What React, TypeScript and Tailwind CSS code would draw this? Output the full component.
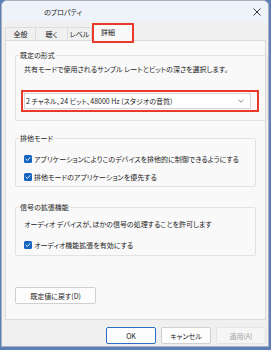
import React from "react";

function Check() {
  return (
    <span className="flex h-[8px] w-[8px] shrink-0 items-center justify-center rounded-[1.5px] bg-[#1565c0]">
      <svg width="6" height="6" viewBox="0 0 6 6" fill="none">
        <path d="M1 3.2 L2.4 4.5 L5 1.6" stroke="#fff" strokeWidth="0.9" strokeLinecap="round" strokeLinejoin="round" />
      </svg>
    </span>
  );
}

function Group({ title, className, children }: { title: string; className: string; children: React.ReactNode }) {
  return (
    <fieldset className={`mx-[9px] rounded-[2px] border border-[#e2e2e2] px-[8px] ${className}`}>
      <legend className="-ml-[5px] px-[1px] leading-[8px]">{title}</legend>
      {children}
    </fieldset>
  );
}

export default function App() {
  return (
    <div className="h-[350px] w-[271px] overflow-hidden bg-[#5d7eb4] text-[7px] leading-[8px] text-[#1b1b1b] [font-family:'Noto_Sans_CJK_JP',sans-serif] [font-feature-settings:'palt']">
      <div className="ml-[1px] flex h-[347px] w-[268px] flex-col overflow-hidden rounded-t-[6px] border border-[#a9b3c0] bg-[#f0f0f0]">
        {/* title bar */}
        <div className="flex h-[21px] shrink-0 items-center bg-[#eef3f9] pl-[42px] pr-[7px]">
          <span className="flex-1">のプロパティ</span>
          <svg width="8" height="8" viewBox="0 0 8 8">
            <path d="M0.5 0.5 L7.5 7.5 M7.5 0.5 L0.5 7.5" stroke="#222" strokeWidth="0.9" />
          </svg>
        </div>

        {/* tabs */}
        <div className="relative z-10 ml-[3px] flex h-[18px] shrink-0 items-end">
          <div className="flex h-[13px] w-[30px] items-center justify-center border-l border-t border-[#dcdcdc]">全般</div>
          <div className="flex h-[13px] w-[32px] items-center justify-center border-l border-t border-[#dcdcdc]">聴く</div>
          <div className="flex h-[13px] w-[25px] items-center justify-center border-l border-r border-t border-[#dcdcdc]">レベル</div>
          <div className="-mb-[3px] flex h-[20px] w-[42px] items-center justify-start border-2 border-[#e8392c] bg-[#f9f9f9] pb-[2px] pl-[7px]">
            詳細
          </div>
        </div>

        {/* panel */}
        <div className="ml-[3px] flex h-[280px] w-[261px] shrink-0 flex-col border border-[#dadada] bg-[#f9f9f9] pt-[10px]">
          <Group title="既定の形式" className="h-[70px] pt-[6px]">
            <div>共有モードで使用されるサンプル レートとビットの深さを選択します。</div>
            <div className="-ml-[3px] mt-[17px] w-[238px] border-2 border-[#e8392c] py-[1px] pl-[1px] pr-[6px]">
              <div className="flex h-[16px] items-center border border-[#d4d4d4] bg-white pl-[1px] pr-[6px]">
                <span className="flex-1">2 チャネル、24 ビット、48000 Hz (スタジオの音質)</span>
                <svg width="6" height="4" viewBox="0 0 6 4">
                  <path d="M0.5 0.8 L3 3.2 L5.5 0.8" stroke="#666" strokeWidth="0.8" fill="none" />
                </svg>
              </div>
            </div>
          </Group>

          <Group title="排他モード" className="mt-[13px] h-[53px] pt-[13px]">
            <div className="flex items-center gap-[2px]">
              <Check />
              <span>アプリケーションによりこのデバイスを排他的に制御できるようにする</span>
            </div>
            <div className="mt-[10px] flex items-center gap-[2px]">
              <Check />
              <span>排他モードのアプリケーションを優先する</span>
            </div>
          </Group>

          <Group title="信号の拡張機能" className="mt-[16px] h-[53px] pt-[9px]">
            <div>オーディオ デバイスが、ほかの信号の処理することを許可します</div>
            <div className="mt-[13px] flex items-center gap-[2px]">
              <Check />
              <span>オーディオ機能拡張を有効にする</span>
            </div>
          </Group>

          <button className="ml-[9px] mt-[31px] flex h-[17px] w-[81px] items-center justify-center rounded-[2px] border border-[#d0d0d0] bg-[#fdfdfd]">
            既定値に戻す(D)
          </button>
        </div>

        {/* footer */}
        <div className="mt-[7px] flex gap-[5px] pl-[104px]">
          <button className="flex h-[17px] w-[50px] items-center justify-center rounded-[2px] border border-[#2a6fc4] bg-[#fdfdfd]">OK</button>
          <button className="flex h-[17px] w-[50px] items-center justify-center rounded-[2px] border border-[#d0d0d0] bg-[#fdfdfd]">キャンセル</button>
          <button className="flex h-[17px] w-[50px] items-center justify-center rounded-[2px] border border-[#e4e4e4] bg-[#f5f5f5] text-[#a3a3a3]">適用(A)</button>
        </div>
      </div>
    </div>
  );
}
